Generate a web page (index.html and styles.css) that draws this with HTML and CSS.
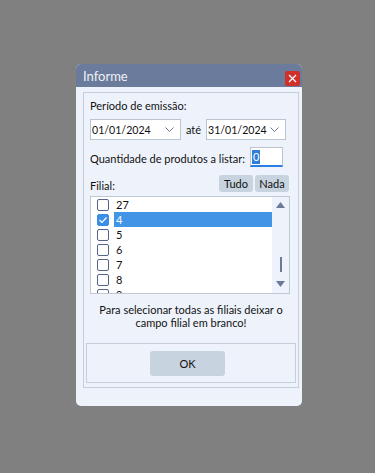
FILE: index.html
```html
<!DOCTYPE html>
<html lang="pt">
<head>
<meta charset="utf-8">
<title>Informe</title>
<link rel="stylesheet" href="styles.css">
</head>
<body>
<div class="dialog">
  <div class="titlebar">
    <span class="title">Informe</span>
    <span class="close">
      <svg width="15" height="15" viewBox="0 0 15 15"><path d="M4 4 L11 11 M11 4 L4 11" stroke="#fff" stroke-width="1.3" fill="none"/></svg>
    </span>
  </div>
  <div class="panel">
    <div class="label first">Período de emissão:</div>
    <div class="daterow">
      <div class="combo c1"><span>01/01/2024</span><svg class="chev" width="9" height="5" viewBox="0 0 9 5"><path d="M0.5 0.5 L4.5 4.5 L8.5 0.5" stroke="#6b7590" stroke-width="1" fill="none"/></svg></div>
      <span class="ate">até</span>
      <div class="combo c2"><span>31/01/2024</span><svg class="chev" width="9" height="5" viewBox="0 0 9 5"><path d="M0.5 0.5 L4.5 4.5 L8.5 0.5" stroke="#6b7590" stroke-width="1" fill="none"/></svg></div>
    </div>
    <div class="qtyrow">
      <span class="label">Quantidade de produtos a listar:</span>
      <div class="qty"><span class="sel">0</span></div>
    </div>
    <div class="filrow">
      <span class="label">Filial:</span>
      <div class="btns"><span class="sbtn">Tudo</span><span class="sbtn">Nada</span></div>
    </div>
    <div class="list">
      <div class="items">
        <div class="row"><span class="cb"></span><span class="txt">27</span></div>
        <div class="row"><span class="cb on"><svg width="10" height="10" viewBox="0 0 10 10"><path d="M1.5 5 L4 7.5 L8.5 2.5" stroke="#fff" stroke-width="1.2" fill="none"/></svg></span><span class="txt hl">4</span></div>
        <div class="row"><span class="cb"></span><span class="txt">5</span></div>
        <div class="row"><span class="cb"></span><span class="txt">6</span></div>
        <div class="row"><span class="cb"></span><span class="txt">7</span></div>
        <div class="row"><span class="cb"></span><span class="txt">8</span></div>
        <div class="row"><span class="cb"></span><span class="txt">9</span></div>
      </div>
      <div class="scroll">
        <svg width="9" height="6" viewBox="0 0 9 6"><path d="M0 6 L4.5 0 L9 6 Z" fill="#6b7a99"/></svg>
        <span class="thumb"></span>
        <svg width="9" height="6" viewBox="0 0 9 6"><path d="M0 0 L4.5 6 L9 0 Z" fill="#6b7a99"/></svg>
      </div>
    </div>
    <div class="note">Para selecionar todas as filiais deixar o<br>campo filial em branco!</div>
    <div class="okbox"><span class="okbtn">OK</span></div>
  </div>
</div>
</body>
</html>
```

FILE: styles.css
```css
html, body {
  margin: 0;
  padding: 0;
}
body {
  background: #808080;
  width: 375px;
  height: 473px;
  padding: 64px 0 0 76px;
  box-sizing: border-box;
  font-family: Lato, "Noto Sans", sans-serif;
  font-size: 11px;
  color: #111;
}
.dialog {
  width: 226px;
  height: 342px;
  background: #eef3fb;
  border-radius: 5px;
  overflow: hidden;
  display: flex;
  flex-direction: column;
}
.titlebar {
  height: 23px;
  background: #6b7b9b;
  display: flex;
  align-items: center;
  justify-content: space-between;
  padding: 0 2px 0 7px;
  flex: none;
}
.title {
  color: #eef0f6;
  font-size: 13px;
  line-height: 16px;
}
.close {
  width: 15px;
  height: 15px;
  background: #d0302a;
  border-radius: 2px;
  display: block;
  margin-top: 5px;
}
.close svg { display: block; }
.panel {
  margin: 5px 3px 0 7px;
  height: 296px;
  box-sizing: border-box;
  border: 1px solid #c6cedb;
  display: flex;
  flex-direction: column;
  padding: 0 0 0 6px;
}
.label { line-height: 15px; white-space: nowrap; }
.label.first { margin-top: 5px; }
.daterow {
  display: flex;
  align-items: center;
  margin-top: 6px;
  height: 21px;
}
.combo {
  height: 21px;
  box-sizing: border-box;
  border: 1px solid #bcc4d1;
  background: #fff;
  display: flex;
  align-items: center;
  justify-content: space-between;
  padding: 0 6px 0 1px;
  flex: none;
  font-size: 10.6px;
}
.c1 { width: 91px; }
.c2 { width: 80px; }
.chev { display: block; }
.ate { width: 25px; text-align: center; }
.qtyrow {
  display: flex;
  align-items: flex-end;
  margin-top: 7px;
  height: 20px;
  padding-right: 15px;
}
.qtyrow .label { line-height: 15px; margin-bottom: 1px; }
.qty {
  width: 33px;
  height: 20px;
  box-sizing: border-box;
  border: 1px solid #bcc4d1;
  border-bottom: 2px solid #2a7de1;
  background: #fff;
  margin-left: auto;
  padding: 2px 0 0 1px;
  flex: none;
}
.sel {
  display: inline-block;
  background: #2f7fd8;
  color: #fff;
  line-height: 14px;
  padding: 0 1px;
}
.filrow {
  display: flex;
  align-items: flex-end;
  justify-content: space-between;
  margin-top: 8px;
  height: 17px;
  padding-right: 9px;
}
.filrow .label { margin-bottom: -1px; }
.btns { display: flex; gap: 2px; }
.sbtn {
  width: 34px;
  height: 17px;
  line-height: 17px;
  text-align: center;
  background: #c8d3e0;
  border-radius: 3px;
}
.list {
  margin-top: 4px;
  width: 200px;
  height: 98px;
  box-sizing: border-box;
  border: 1px solid #c0c8d5;
  background: #fff;
  display: flex;
  overflow: hidden;
  flex: none;
}
.items { flex: 1; }
.row {
  height: 15px;
  display: flex;
  align-items: center;
}
.cb {
  width: 12px;
  height: 12px;
  box-sizing: border-box;
  border: 1px solid #55658a;
  border-radius: 2px;
  margin: 0 5px 0 6px;
  background: #fff;
  flex: none;
}
.cb.on {
  background: #3a8ee6;
  border-color: #3a8ee6;
}
.cb svg { display: block; margin: 0; }
.txt {
  height: 15px;
  line-height: 15px;
  flex: 1;
  padding-left: 2px;
}
.txt.hl { background: #4294e6; color: #fff; }
.scroll {
  width: 17px;
  flex: none;
  background: #eef3fb;
  display: flex;
  flex-direction: column;
  align-items: center;
  padding-top: 5px;
}
.scroll svg { display: block; }
.thumb {
  width: 2px;
  height: 15px;
  background: #6b7a99;
  margin: 49px 0 9px;
}
.note {
  text-align: center;
  line-height: 13px;
  margin: 9px 0 0 -6px;
  white-space: nowrap;
}
.okbox {
  margin: 14px 2px 0 -4px;
  height: 40px;
  box-sizing: border-box;
  border: 1px solid #c6cedb;
  display: flex;
  align-items: center;
  justify-content: center;
  padding-right: 7px;
  flex: none;
}
.okbtn {
  width: 75px;
  height: 25px;
  line-height: 25px;
  text-align: center;
  background: #c8d3e0;
  border-radius: 3px;
}
```
